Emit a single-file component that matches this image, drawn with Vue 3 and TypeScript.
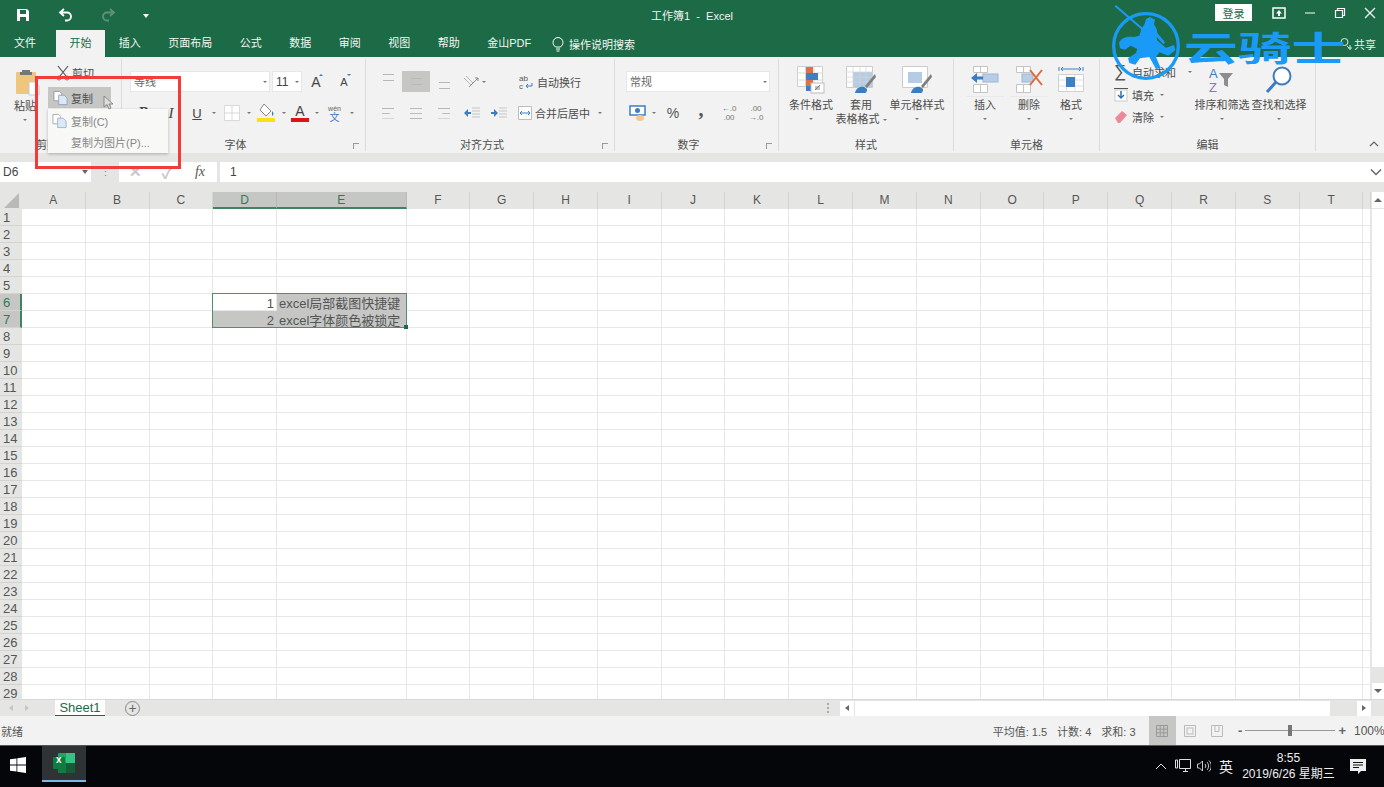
<script setup lang="ts">
const tabs = ['插入', '页面布局', '公式', '数据', '审阅', '视图', '帮助', '金山PDF']
const columns = ['A', 'B', 'C', 'D', 'E', 'F', 'G', 'H', 'I', 'J', 'K', 'L', 'M', 'N', 'O', 'P', 'Q', 'R', 'S', 'T', '']
const rows = Array.from({ length: 29 }, (_, i) => i + 1)

// 表格里有内容的单元格
const values: Record<string, string> = {
  D6: '1',
  D7: '2',
  E6: 'excel局部截图快捷键',
  E7: 'excel字体颜色被锁定',
}

const isHeadSelected = (c: string) => c === 'D' || c === 'E'
const isRowSelected = (r: number) => r === 6 || r === 7
const isCellSelected = (c: string, r: number) => isHeadSelected(c) && isRowSelected(r) && !(c === 'D' && r === 6)
</script>

<template>
  <div class="app">
    <header class="titlebar">
      <div class="quick">
        <svg class="q-save" width="16" height="16" viewBox="0 0 16 16"><path d="M2 2h10l2 2v10H2z" fill="#fff" /><rect x="5" y="3" width="6" height="4" fill="#1d6b46" /><rect x="5" y="10" width="6" height="4" fill="#1d6b46" /></svg>
        <svg class="q-undo" width="16" height="16" viewBox="0 0 16 16"><path d="M6 2L2 5.5 6 9M3 5.5h6a4 4 0 0 1 0 8H7" fill="none" stroke="#fff" stroke-width="1.8" /></svg>
        <svg class="q-redo" width="16" height="16" viewBox="0 0 16 16"><path d="M10 2l4 3.5L10 9M13 5.5H7a4 4 0 0 0 0 8h2" fill="none" stroke="#5d9279" stroke-width="1.8" /></svg>
        <svg class="q-more" width="8" height="8" viewBox="0 0 8 8"><path d="M1 3h6L4 7z" fill="#fff" /></svg>
      </div>
      <div class="doc-title">工作簿1&nbsp; - &nbsp;Excel</div>
      <button class="login">登录</button>
      <div class="win-btns">
        <svg width="14" height="12" viewBox="0 0 14 12"><rect x="1" y="1" width="12" height="10" fill="none" stroke="#fff" stroke-width="1.5" /><path d="M7 3L4 6.5h2V9h2V6.5h2z" fill="#fff" /></svg>
        <svg width="12" height="12" viewBox="0 0 12 12"><path d="M1 6h10" stroke="#fff" /></svg>
        <svg width="12" height="12" viewBox="0 0 12 12"><path d="M1.5 3.5h7v7h-7zM3.5 3.5v-2h7v7h-2" fill="none" stroke="#fff" stroke-width="1.2" /></svg>
        <svg width="12" height="12" viewBox="0 0 12 12"><path d="M1 1l10 10M11 1L1 11" stroke="#fff" stroke-width="1.1" /></svg>
      </div>
    </header>

    <nav class="tabs">
      <span class="tab tab-file">文件</span>
      <span class="tab active">开始</span>
      <span v-for="t in tabs" :key="t" class="tab">{{ t }}</span>
      <svg class="bulb" width="12" height="16" viewBox="0 0 12 16"><path d="M3.500 11C2 9.500 1 8.500 1 6.500a5 5 0 0 1 10 0c0 2-1 3-2.500 4.500zM4 13h4M4.500 15h3" fill="none" stroke="#fff" /></svg>
      <span class="search">操作说明搜索</span>
      <span class="share">
        <svg width="14" height="14" viewBox="0 0 14 14"><circle cx="5.500" cy="5" r="3.500" fill="none" stroke="#dfe9e4" /><path d="M8 9l2 2M11 8v5M9 11h4" stroke="#dfe9e4" fill="none" /></svg>
        共享
      </span>
    </nav>

    <section class="ribbon">
      <!-- 剪贴板 -->
      <div class="group" style="width: 122px">
        <div class="body flexrow">
          <div class="big paste">
            <svg class="big-icon" width="26" height="28" viewBox="0 0 26 28">
              <rect x="1" y="4" width="20" height="22" rx="1" fill="#f0c67c" />
              <path d="M7 4V2h8v2h2v3H5V4z" fill="#777" />
              <path d="M14 14h6l4 4v9H14z" fill="#fff" stroke="#c9c9c9" />
            </svg>
            <span class="big-text">粘贴</span>
            <i class="caret" />
          </div>
          <div class="clip-col">
            <div class="clip-row cut">
              <svg width="14" height="16" viewBox="0 0 14 16"><path d="M2 1l8 10M12 1L4 11" stroke="#555" stroke-width="1.2" /><circle cx="3" cy="13" r="2" fill="none" stroke="#3e7cc0" /><circle cx="11" cy="13" r="2" fill="none" stroke="#3e7cc0" /></svg>
              <span>剪切</span>
            </div>
            <div class="clip-row copy">
              <svg width="15" height="16" viewBox="0 0 16 16"><path d="M1 1h6l2 2v8H1z" fill="#fff" stroke="#999" /><path d="M6 5h6l3 3v7H6z" fill="#dce8f5" stroke="#8fa8c4" /></svg>
              <span>复制</span>
            </div>
          </div>
        </div>
        <div class="label off">剪贴板</div>
      </div>

      <!-- 字体 -->
      <div class="group" style="width: 244px">
        <div class="body pad8">
          <div class="row1 flexrow">
            <div class="box" style="width: 140px">等线<i class="caret end" /></div>
            <div class="box size" style="width: 30px">11<i class="caret end" /></div>
            <span class="ic" style="width: 28px"><b class="grow">A</b><i class="up" /></span>
            <span class="ic" style="width: 28px"><b class="shrink">A</b><i class="up dn" /></span>
          </div>
          <div class="row2 flexrow">
            <span class="ic letter" style="width: 28px"><b>B</b></span>
            <span class="ic letter" style="width: 26px"><i class="ital">I</i></span>
            <span class="ic letter" style="width: 26px"><u>U</u></span>
            <i class="caret c8" />
            <span class="ic" style="width: 27px">
              <svg width="16" height="16" viewBox="0 0 16 16"><path d="M.5.500h15v15H.5zM8 .5v15M.5 8h15" fill="#fff" stroke="#d9d9d9" /></svg>
            </span>
            <i class="caret c8 c7" />
            <span class="ic" style="width: 28px">
              <svg width="18" height="20" viewBox="0 0 18 20"><path d="M7 1l7 7-5 5-6-6z" fill="#fff" stroke="#888" /><path d="M15 8c2 2 2 4 0 5z" fill="#3e7cc0" /><rect y="15" width="18" height="4" fill="#fbe016" /></svg>
            </span>
            <i class="caret c8 c7" />
            <span class="ic" style="width: 26px">
              <svg width="18" height="20" viewBox="0 0 18 20"><text x="9" y="13" class="svg-a" text-anchor="middle">A</text><rect y="15" width="18" height="4" fill="#dc1414" /></svg>
            </span>
            <i class="caret c8" />
            <span class="ic wen" style="width: 27px"><small>wén</small><em>文</em></span>
            <i class="caret c8" />
          </div>
        </div>
        <div class="label off">字体<i class="launcher" /></div>
      </div>

      <!-- 对齐方式 -->
      <div class="group" style="width: 249px">
        <div class="body pad8">
          <div class="row1 flexrow">
            <span class="ic al" style="width: 28px"><i class="lines top" /></span>
            <span class="ic al on" style="width: 28px"><i class="lines" /></span>
            <span class="ic al" style="width: 28px"><i class="lines bot" /></span>
            <span class="ic" style="width: 26px">
              <svg width="16" height="14" viewBox="0 0 16 14"><path d="M1 3l7 7M3 1l7 7" stroke="#b5b5b5" /><path d="M6 12L15 3M12 3h3v3" stroke="#888" fill="none" /></svg>
            </span>
            <i class="caret c8 orient" />
            <span class="wrap-btn">
              <svg width="14" height="16" viewBox="0 0 14 16"><text x="0" y="7" class="svg-ab">ab</text><text x="0" y="15" class="svg-ab">c</text><path d="M13 9v3H7M9 10l-2 2 2 2" stroke="#3e7cc0" fill="none" /></svg>
              自动换行
            </span>
          </div>
          <div class="row2 flexrow">
            <span class="ic al" style="width: 28px"><i class="lines wide left" /></span>
            <span class="ic al" style="width: 28px"><i class="lines wide" /></span>
            <span class="ic al" style="width: 28px"><i class="lines wide right" /></span>
            <span class="ic" style="width: 27px">
              <svg width="16" height="12" viewBox="0 0 16 12"><path d="M8 1h8M8 4h8M8 7h8M8 10h8" stroke="#c5c5c5" /><path d="M0 6l4-4v3h3v2H4v3z" fill="#3e7cc0" /></svg>
            </span>
            <span class="ic" style="width: 28px">
              <svg width="16" height="12" viewBox="0 0 16 12"><path d="M8 1h8M8 4h8M8 7h8M8 10h8" stroke="#c5c5c5" /><path d="M7 6L3 2v3H0v2h3v3z" fill="#3e7cc0" /></svg>
            </span>
            <span class="wrap-btn merge">
              <svg width="14" height="14" viewBox="0 0 14 14"><path d="M.5.500h13v13H.5z" fill="#fff" stroke="#bdbdbd" /><path d="M2 7h10M4 5L2 7l2 2M10 5l2 2-2 2" fill="none" stroke="#3e7cc0" /></svg>
              合并后居中
            </span>
            <i class="caret c8 merge-c" />
          </div>
        </div>
        <div class="label off">对齐方式<i class="launcher" /></div>
      </div>

      <!-- 数字 -->
      <div class="group" style="width: 164px">
        <div class="body pad11">
          <div class="row1 flexrow">
            <div class="box" style="width: 144px">常规<i class="caret end" /></div>
          </div>
          <div class="row2 flexrow">
            <span class="ic" style="width: 24px">
              <svg width="18" height="17" viewBox="0 0 18 17"><rect x="1" y="1" width="15" height="9" fill="#fff" stroke="#3e7cc0" stroke-width="1.500" /><circle cx="8.500" cy="5.500" r="2.500" fill="#3e7cc0" /><ellipse cx="11" cy="13" rx="4" ry="3" fill="#f2c98f" /></svg>
            </span>
            <i class="caret c8" />
            <span class="ic pct" style="width: 30px">%</span>
            <span class="ic comma" style="width: 26px">,</span>
            <span class="ic dec" style="width: 30px"><small><em>←</em>.0</small><small>.00</small></span>
            <span class="ic dec" style="width: 24px"><small>.00</small><small><em>→</em>.0</small></span>
          </div>
        </div>
        <div class="label off">数字<i class="launcher" /></div>
      </div>

      <!-- 样式 -->
      <div class="group" style="width: 175px">
        <div class="body flexrow pad7">
          <div class="big" style="width: 50px">
            <svg class="big-icon" width="28" height="28" viewBox="0 0 28 28">
              <path d="M.5.500h25v20H.5z" fill="#fff" stroke="#d0d0d0" />
              <path d="M8.500.5v20M17 .5v20M.5 7h25M.5 14h25" stroke="#d8d8d8" />
              <rect x="9" y="1" width="7" height="6" fill="#e07140" />
              <rect x="9" y="7" width="12" height="7" fill="#3f7fc4" />
              <rect x="9" y="14" width="7" height="6" fill="#e07140" />
              <rect x="9" y="20" width="7" height="5" fill="#3f7fc4" />
              <rect x="14" y="17" width="13" height="10" fill="#fff" stroke="#bbb" />
              <path d="M18 24l5-5M18 21h5M18 23h5" stroke="#666" stroke-width=".8" />
            </svg>
            <span class="big-text">条件格式</span>
            <i class="caret" />
          </div>
          <div class="big" style="width: 50px">
            <svg class="big-icon" width="30" height="28" viewBox="0 0 30 28">
              <path d="M.5.500h26v21H.5z" fill="#fff" stroke="#ccc" />
              <path d="M7 6h19v15H7z" fill="#b6cbe4" />
              <path d="M.5 6h26M.5 11h26M.5 16h26M7 .5v21M14 .5v21M20 .5v21" stroke="#d5d5d5" stroke-width=".7" />
              <path d="M29 8L19 20l2 2L30 11z" fill="#7f7f7f" />
              <path d="M9 27c1-5 5-7 9-6l3 2c0 3-1 4-2 4z" fill="#3e7cc0" />
            </svg>
            <span class="big-text">套用</span>
            <span class="big-text">表格格式 <i class="caret inl" /></span>
          </div>
          <div class="big" style="width: 62px">
            <svg class="big-icon" width="30" height="28" viewBox="0 0 30 28">
              <path d="M.5.500h25v21H.5z" fill="#fff" stroke="#ccc" />
              <path d="M6 6h14v11H6z" fill="#b6cbe4" />
              <path d="M29 8L19 20l2 2L30 11z" fill="#7f7f7f" />
              <path d="M9 27c1-5 5-7 9-6l3 2c0 3-1 4-2 4z" fill="#3e7cc0" />
            </svg>
            <span class="big-text">单元格样式</span>
            <i class="caret" />
          </div>
        </div>
        <div class="label">样式</div>
      </div>

      <!-- 单元格 -->
      <div class="group" style="width: 146px">
        <div class="body flexrow pad9">
          <div class="big split" style="width: 44px">
            <svg class="big-icon" width="28" height="28" viewBox="0 0 28 28">
              <path d="M2.500.500h14v6h-14zM9.500.5v6M2.500 18.500h14v8h-14zM9.500 18.500v8" fill="#fff" stroke="#c4c4c4" />
              <rect x="12" y="8" width="15" height="8" fill="#b8cde5" stroke="#9db6d3" />
              <path d="M0 12l6-5v3.500h6v3H6V17z" fill="#3e7cc0" />
            </svg>
            <span class="big-text">插入</span>
            <i class="caret" />
          </div>
          <div class="big split" style="width: 44px">
            <svg class="big-icon" width="28" height="28" viewBox="0 0 28 28">
              <path d="M1.500.500h14v6h-14zM8.500.5v6M1.500 18.500h14v8h-14zM8.500 18.500v8" fill="#fff" stroke="#c4c4c4" />
              <rect x="7" y="8" width="11" height="8" fill="#b8cde5" stroke="#9db6d3" />
              <path d="M15 4l12 15M27 4L15 19" stroke="#df6b38" stroke-width="2" />
            </svg>
            <span class="big-text">删除</span>
            <i class="caret" />
          </div>
          <div class="big" style="width: 40px">
            <svg class="big-icon" width="26" height="28" viewBox="0 0 26 28">
              <path d="M1 1l0 4M25 1v4M3 3h20M3 3l2-2M3 3l2 2M23 3l-2-2M23 3l-2 2" stroke="#3e7cc0" fill="none" />
              <path d="M.5 8.500h25v17H.5z" fill="#fff" stroke="#cfcfcf" />
              <path d="M8.500 8.500v17M17 8.500v17M.5 14h25M.5 20h25" stroke="#dedede" />
              <rect x="8" y="11" width="9" height="10" fill="#3f7fc4" />
            </svg>
            <span class="big-text">格式</span>
            <i class="caret" />
          </div>
        </div>
        <div class="label">单元格</div>
      </div>

      <!-- 编辑 -->
      <div class="group" style="width: 216px">
        <div class="body flexrow pad14">
          <div class="edit-col">
            <div class="edit-row">
              <span class="sigma">∑</span>
              <span>自动求和</span><i class="caret c8 sum-c" />
            </div>
            <div class="edit-row">
              <svg width="14" height="14" viewBox="0 0 14 14"><path d="M0 .5h14" stroke="#555" /><rect x="1" y="2" width="12" height="11" fill="#fff" stroke="#ccc" /><path d="M7 3v7M4 7l3 3 3-3" fill="none" stroke="#2b70b8" stroke-width="1.500" /></svg>
              <span>填充</span><i class="caret c8" />
            </div>
            <div class="edit-row">
              <svg width="14" height="14" viewBox="0 0 14 14"><path d="M1 8l7-7 5 4-7 8H4z" fill="#ec8a97" /></svg>
              <span>清除</span><i class="caret c8" />
            </div>
          </div>
          <div class="big" style="width: 56px">
            <svg class="big-icon" width="28" height="28" viewBox="0 0 28 28">
              <text x="1" y="12" class="svg-az blue">A</text>
              <text x="1" y="26" class="svg-az purple">Z</text>
              <path d="M11 7h14l-5 6v8l-4-2v-6z" fill="#8d8d8d" />
            </svg>
            <span class="big-text">排序和筛选</span>
            <i class="caret" />
          </div>
          <div class="big" style="width: 58px">
            <svg class="big-icon" width="28" height="28" viewBox="0 0 28 28">
              <circle cx="17" cy="10" r="8.500" fill="#fff" stroke="#3e7cc0" stroke-width="2" />
              <path d="M11 16L2 26" stroke="#3e7cc0" stroke-width="3" />
            </svg>
            <span class="big-text">查找和选择</span>
            <i class="caret" />
          </div>
        </div>
        <div class="label">编辑</div>
      </div>

      <div class="collapse-wrap">
        <svg width="10" height="8" viewBox="0 0 10 8"><path d="M1 6l4-4 4 4" fill="none" stroke="#666" stroke-width="1.200" /></svg>
      </div>
    </section>

    <div class="band" />

    <div class="fxbar">
      <div class="namebox">D6<i class="caret-dark" /></div>
      <div class="fx-dots">⋮</div>
      <div class="fx-btns">
        <span class="fx-x">✕</span>
        <span class="fx-ok">✓</span>
        <span class="fx-f">fx</span>
      </div>
      <div class="fx-input">
        <span>1</span>
        <svg width="12" height="8" viewBox="0 0 12 8"><path d="M1 1.500l5 5 5-5" fill="none" stroke="#666" stroke-width="1.500" /></svg>
      </div>
    </div>

    <main class="sheet-wrap">
      <div class="sheet">
        <div class="corner">
          <svg width="16" height="15" viewBox="0 0 16 15"><path d="M15 0v15H0z" fill="#b9bab8" /></svg>
        </div>
        <div v-for="c in columns" :key="c" class="col-head" :class="{ 'head-on': isHeadSelected(c) }">{{ c }}</div>
        <template v-for="r in rows" :key="r">
          <div class="row-head" :class="{ 'row-on': isRowSelected(r) }">{{ r }}</div>
          <div
            v-for="c in columns"
            :key="c"
            class="cell"
            :class="{ sel: isCellSelected(c, r), num: c === 'D' }"
          >{{ values[c + r] }}</div>
        </template>
        <div class="selection"><i class="handle" /></div>
      </div>
      <div class="vscroll">
        <div class="v-btn"><i class="tri-up" /></div>
        <div class="v-thumb" />
        <div class="v-track" />
        <div class="v-btn"><i class="tri-down" /></div>
      </div>
    </main>

    <div class="sheetbar">
      <div class="sheet-nav"><i class="nav-l" /><i class="nav-r" /></div>
      <div class="sheet-tab">Sheet1</div>
      <div class="add-sheet">+</div>
      <div class="spacer" />
      <div class="split-dots"><i /><i /><i /></div>
      <div class="hscroll">
        <div class="h-btn"><i class="h-l" /></div>
        <div class="h-thumb" />
        <div class="h-track" />
        <div class="h-btn"><i class="h-r" /></div>
      </div>
    </div>

    <footer class="status">
      <span class="ready">就绪</span>
      <div class="spacer" />
      <span class="stat">平均值: 1.5</span>
      <span class="stat">计数: 4</span>
      <span class="stat last">求和: 3</span>
      <div class="view on">
        <svg width="12" height="12" viewBox="0 0 12 12"><path d="M.5.500h11v11H.5zM4.200.5v11M7.800.5v11M.5 4.200h11M.5 7.800h11" fill="none" stroke="#999" /></svg>
      </div>
      <div class="view">
        <svg width="12" height="12" viewBox="0 0 12 12"><path d="M.5.500h11v11H.5z" fill="none" stroke="#bbb" /><rect x="3" y="3" width="6" height="6" fill="none" stroke="#bbb" /></svg>
      </div>
      <div class="view">
        <svg width="12" height="12" viewBox="0 0 12 12"><path d="M.5.500h11v11H.5zM4 .5v6h4v-6" fill="none" stroke="#bbb" /></svg>
      </div>
      <div class="zoom">
        <span class="z-sign">-</span>
        <div class="z-track"><i class="z-thumb" /></div>
        <span class="z-sign">+</span>
      </div>
      <span class="pct-text">100%</span>
    </footer>

    <div class="taskbar">
      <div class="start">
        <svg width="16" height="16" viewBox="0 0 16 16"><path d="M0 2.300l6.500-.9v6.200H0zM7.300 1.300L16 0v7.600H7.300zM0 8.400h6.500v6.200L0 13.700zM7.300 8.400H16V16l-8.700-1.300z" fill="#fff" /></svg>
      </div>
      <div class="task-item">
        <svg width="22" height="20" viewBox="0 0 22 20">
          <rect x="5" y="0" width="17" height="20" rx="1" fill="#21a366" />
          <rect x="13" y="0" width="9" height="10" fill="#33c481" />
          <rect x="5" y="10" width="9" height="10" fill="#107c41" />
          <rect x="13" y="10" width="9" height="10" fill="#185c37" />
          <rect x="0" y="4" width="12" height="12" rx="1" fill="#107c41" />
        </svg>
        <span class="task-x">x</span>
      </div>
      <div class="spacer" />
      <div class="tray">
        <svg width="12" height="8" viewBox="0 0 12 8"><path d="M1 7l5-5 5 5" fill="none" stroke="#ddd" /></svg>
        <svg class="tray-net" width="16" height="14" viewBox="0 0 16 14"><path d="M4.500.5h11v9h-11zM8 12.500h5M10.500 10v2M.5 1h2v8h-2z" fill="none" stroke="#ddd" /></svg>
        <svg class="tray-vol" width="14" height="12" viewBox="0 0 14 12"><path d="M.5 4h2l3-3v10l-3-3h-2zM8 4c1 1 1 3 0 4M10 2c2 2 2 6 0 8M12 .5c3 3 3 8 0 11" fill="none" stroke="#ddd" stroke-width=".9" /></svg>
        <span class="ime">英</span>
        <div class="clock">
          <span>8:55</span>
          <span>2019/6/26 星期三</span>
        </div>
        <svg class="notify" width="16" height="15" viewBox="0 0 16 15"><path d="M0 0h16v12h-5l-3 3v-3H0z" fill="#eee" /><path d="M3 3.500h10M3 6h10M3 8.500h6" stroke="#111" /></svg>
      </div>
    </div>

    <!-- 盖在上层：复制菜单、红框、光标、水印 -->
    <div class="popup">
      <div class="pop-item">
        <svg width="15" height="16" viewBox="0 0 16 16"><path d="M1 1h6l2 2v8H1z" fill="#fff" stroke="#aaa" /><path d="M6 5h6l3 3v7H6z" fill="#dce8f5" stroke="#9fb6d0" /></svg>
        <span>复制(C)</span>
      </div>
      <div class="pop-item"><span class="no-icon">复制为图片(P)...</span></div>
    </div>
    <div class="redbox" />
    <svg class="cursor" width="11" height="15" viewBox="0 0 11 15"><path d="M1 1v11l3-2.500 2 4.500 2-1-2-4h4z" fill="#ddd" stroke="#777" stroke-width=".8" /></svg>

    <div class="watermark">
      <svg class="wm-logo" width="74" height="80" viewBox="30 10 222 240">
        <circle cx="138" cy="139" r="97" fill="none" stroke="#1a9af7" stroke-width="10" />
        <path d="M46 18L200 150" stroke="#1a9af7" stroke-width="6" />
        <path d="M57 130C62 115 80 108 100 112L118 108 124 88 134 72 138 58 150 52 165 60 162 74 170 88 172 100 195 128 190 134 170 112 172 130 195 146 222 136 226 152 205 168 178 158 168 172 182 205 168 208 148 172 120 176 106 195 88 190 84 176 108 160 112 148 92 138 75 150 60 146Z" fill="#1a9af7" />
      </svg>
      <span class="wm-text">云骑士</span>
    </div>
  </div>
</template>

<style scoped>
.app {
  position: relative;
  width: 1384px;
  height: 787px;
  overflow: hidden;
  display: flex;
  flex-direction: column;
  background: #f1f2f1;
  color: #4d4d4d;
  font-family: "Liberation Sans", "Noto Sans CJK SC", sans-serif;
  font-size: 11px;
}

.spacer {
  flex: 1;
}

.flexrow {
  display: flex;
  align-items: center;
}

/* 标题栏 */
.titlebar {
  height: 30px;
  flex: none;
  display: flex;
  align-items: center;
  background: #1d6b46;
  color: #fff;
}

.quick {
  display: flex;
  align-items: center;
  width: 560px;
  padding-left: 15px;
  box-sizing: border-box;
}

.q-undo {
  margin-left: 27px;
}

.q-redo {
  margin-left: 26px;
}

.q-more {
  margin-left: 26px;
}

.doc-title {
  width: 264px;
  text-align: center;
  font-size: 11px;
  color: #eef5f1;
}

.login {
  margin-left: 391px;
  width: 37px;
  height: 17px;
  margin-top: -5px;
  border: none;
  background: #fff;
  color: #1d6b46;
  font: inherit;
  padding: 0;
}

.win-btns {
  display: flex;
  align-items: center;
  margin-left: 20px;
  gap: 18px;
  margin-top: -5px;
}

/* 选项卡 */
.tabs {
  height: 27px;
  flex: none;
  display: flex;
  align-items: center;
  background: #1d6b46;
  color: #f2f7f4;
}

.tab {
  height: 27px;
  line-height: 26px;
  padding: 0 13.75px;
  font-size: 11px;
}

.tab-file {
  width: 56px;
  padding: 0;
  text-align: center;
  box-sizing: border-box;
  text-indent: -6px;
}

.tab.active {
  width: 49px;
  padding: 0;
  text-align: center;
  background: #f1f2f1;
  color: #1d6b46;
}

.bulb {
  margin-left: 7px;
}

.search {
  margin-left: 5px;
  font-size: 11px;
}

.share {
  margin-left: auto;
  margin-right: 8px;
  display: flex;
  align-items: center;
  gap: 1px;
  color: #e6eee9;
}

/* 功能区 */
.ribbon {
  height: 96px;
  flex: none;
  display: flex;
  padding-top: 2px;
  box-sizing: border-box;
  background: #f1f2f1;
}

.group {
  height: 92px;
  box-sizing: border-box;
  border-right: 1px solid #dcdddb;
  display: flex;
  flex-direction: column;
}

.body {
  height: 78px;
  flex: none;
}

.pad7 {
  padding-left: 7px;
}

.pad8 {
  padding-left: 8px;
}

.pad9 {
  padding-left: 9px;
}

.pad11 {
  padding-left: 11px;
}

.pad14 {
  padding-left: 14px;
}

.body.flexrow {
  align-items: flex-start;
}

.label {
  position: relative;
  height: 16px;
  line-height: 16px;
  text-align: center;
  color: #505050;
}

/* 带右下角小按钮的分组，标题偏左 */
.label.off {
  padding-right: 16px;
}

.launcher {
  position: absolute;
  right: 6px;
  top: 6px;
  width: 5px;
  height: 5px;
  border-left: 1px solid #999;
  border-top: 1px solid #999;
}

.row1 {
  height: 21px;
  margin-top: 12px;
}

.row2 {
  height: 22px;
  margin-top: 10px;
}

.box {
  position: relative;
  height: 21px;
  line-height: 21px;
  box-sizing: border-box;
  padding-left: 3px;
  margin-right: 2px;
  background: #fff;
  color: #666;
  border: 1px solid #e6e7e6;
}

.box.size {
  margin-right: 0;
  font-size: 12px;
  color: #444;
}

.ic {
  position: relative;
  flex: none;
  height: 22px;
  display: flex;
  align-items: center;
  justify-content: center;
}

.caret {
  display: block;
  width: 0;
  height: 0;
  flex: none;
  border-left: 2px solid transparent;
  border-right: 2px solid transparent;
  border-top: 2px solid #777;
}

.caret.end {
  position: absolute;
  right: 2px;
  top: 9px;
}

.caret.c8 {
  margin: 0 2px;
}

.caret.c7 {
  margin: 0 1.500px;
}

.caret.inl {
  display: inline-block;
  vertical-align: middle;
}

.caret.orient {
  margin-left: -2px;
}

.caret.merge-c {
  margin-left: 8px;
}

.caret.sum-c {
  margin-left: 8px;
}

.grow {
  font-size: 14px;
  font-weight: 400;
  color: #444;
}

.shrink {
  font-size: 11px;
  font-weight: 400;
  color: #444;
}

.up {
  position: absolute;
  top: 3px;
  left: 17px;
  width: 0;
  height: 0;
  border-left: 2px solid transparent;
  border-right: 2px solid transparent;
  border-bottom: 2px solid #3e7cc0;
}

.up.dn {
  border-bottom: none;
  border-top: 2px solid #3e7cc0;
}

.letter {
  font-size: 14px;
  color: #444;
  font-family: "Liberation Serif", serif;
}

.letter u {
  font-family: "Liberation Sans", sans-serif;
  font-size: 13px;
}

.ital {
  font-style: italic;
  font-size: 15px;
}

.wen {
  flex-direction: column;
  line-height: 9px;
}

.wen small {
  font-size: 7px;
  color: #666;
}

.wen em {
  font-style: normal;
  font-size: 10px;
  color: #3e7cc0;
}

.svg-a {
  font-size: 14px;
  fill: #444;
}

.svg-ab {
  font-size: 8px;
  fill: #555;
}

.svg-az {
  font-size: 13px;
}

.svg-az.blue {
  fill: #3e7cc0;
}

.svg-az.purple {
  fill: #a868c0;
}

.al.on {
  height: 21px;
  background: #c6c7c5;
}

.lines {
  display: block;
  width: 11px;
  height: 5px;
  border-top: 1px solid #b8b8b8;
  border-bottom: 1px solid #b8b8b8;
}

.lines.top {
  margin-top: -8px;
}

.lines.bot {
  margin-top: 8px;
}

.lines.wide {
  width: 12px;
  height: 9px;
  background: linear-gradient(#bdbdbd, #bdbdbd) center / 100% 1px no-repeat;
}

.lines.left {
  clip-path: polygon(0 0, 100% 0, 100% 30%, 65% 30%, 65% 70%, 100% 70%, 100% 100%, 0 100%);
}

.lines.right {
  clip-path: polygon(0 0, 100% 0, 100% 100%, 0 100%, 0 70%, 35% 70%, 35% 30%, 0 30%);
}

.wrap-btn {
  display: flex;
  align-items: center;
  gap: 4px;
  margin-left: 31px;
  white-space: nowrap;
  color: #4d4d4d;
}

.wrap-btn.merge {
  margin-left: 5px;
  gap: 3px;
}

.pct {
  font-size: 14px;
  color: #555;
}

.comma {
  font-size: 20px;
  font-weight: 700;
  color: #555;
  font-family: "Liberation Serif", serif;
  padding-bottom: 8px;
  box-sizing: border-box;
}

.dec {
  flex-direction: column;
  line-height: 9px;
}

.dec small {
  font-size: 8px;
  color: #777;
}

.dec em {
  font-style: normal;
  color: #2f73ba;
  font-weight: 700;
}

.big {
  flex: none;
  display: flex;
  flex-direction: column;
  align-items: center;
}

.big-icon {
  margin-top: 7px;
  height: 28px;
}

.big-text {
  line-height: 14px;
  white-space: nowrap;
  color: #4d4d4d;
}

.big-text:first-of-type {
  margin-top: 4px;
}

.big > .caret {
  margin-top: 6px;
}

.split .big-text:first-of-type {
  margin-top: 2px;
  padding-top: 1px;
  width: 38px;
  text-align: center;
  border-top: 1px solid #e9eae8;
}

.paste {
  width: 50px;
}

.paste .big-icon {
  margin: 9px 0 0 5px;
}

.paste .big-text:first-of-type {
  margin-top: 3px;
}

.clip-col {
  margin-left: -2px;
}

.clip-row {
  display: flex;
  align-items: center;
  gap: 3px;
  width: 63px;
  height: 21px;
  box-sizing: border-box;
}

.cut {
  margin-top: 3px;
  padding-left: 8px;
  gap: 2px;
}

.copy {
  margin-top: 4px;
  padding-left: 5px;
}

.copy {
  background: #c6c7c5;
}

.edit-col {
  width: 80px;
  padding-top: 2px;
}

.edit-row {
  display: flex;
  align-items: center;
  height: 22.500px;
  gap: 4px;
}

.sigma {
  width: 14px;
  font-size: 17px;
  line-height: 14px;
  color: #555;
}

.collapse-wrap {
  flex: 1;
  display: flex;
  justify-content: flex-end;
  align-items: flex-end;
  padding: 0 5px 5px 0;
}

.band {
  height: 9px;
  flex: none;
  background: #e5e6e4;
}

/* 编辑栏 */
.fxbar {
  height: 20px;
  flex: none;
  display: flex;
  background: #e5e6e4;
}

.namebox {
  position: relative;
  width: 91px;
  line-height: 20px;
  padding-left: 3px;
  box-sizing: border-box;
  background: #fff;
  font-size: 12px;
  color: #444;
}

.caret-dark {
  position: absolute;
  right: 3px;
  top: 8px;
  width: 0;
  height: 0;
  border-left: 3.500px solid transparent;
  border-right: 3.500px solid transparent;
  border-top: 4px solid #666;
}

.fx-dots {
  width: 28px;
  text-align: center;
  line-height: 20px;
  color: #888;
}

.fx-btns {
  width: 98px;
  display: flex;
  align-items: center;
  background: #fff;
}

.fx-x,
.fx-ok {
  width: 32px;
  color: #c8c8c8;
  font-size: 15px;
  font-weight: 700;
  text-align: center;
}

.fx-f {
  width: 34px;
  text-align: center;
  font-family: "Liberation Serif", serif;
  font-style: italic;
  font-size: 14px;
  color: #555;
}

.fx-input {
  flex: 1;
  margin-left: 3px;
  display: flex;
  align-items: center;
  justify-content: space-between;
  padding: 0 2px 0 10px;
  background: #fff;
  font-size: 12px;
  color: #444;
}

/* 表格 */
.sheet-wrap {
  flex: 1;
  min-height: 0;
  display: flex;
  padding-top: 10px;
  box-sizing: border-box;
  background: #e5e6e4;
}

.sheet {
  position: relative;
  width: 1371px;
  display: grid;
  grid-template-columns: 22px repeat(4, 63.75px) 129.5px repeat(15, 63.8px) 7.5px;
  grid-template-rows: 16.5px repeat(29, 17.02px);
  overflow: hidden;
  background: #fff;
  font-size: 13px;
}

.corner {
  display: flex;
  align-items: flex-end;
  justify-content: flex-end;
  padding: 0 2px 1px 0;
  background: #e5e6e4;
  overflow: hidden;
}

.col-head {
  background: #e5e6e4;
  border-right: 1px solid #d3d4d2;
  box-sizing: border-box;
  text-align: center;
  line-height: 16px;
  font-size: 12px;
  color: #555;
}

.col-head.head-on {
  background: #c6c7c5;
  border-bottom: 2px solid #3c8561;
  color: #2f7a55;
  border-right-color: #b9bab8;
}

.row-head {
  background: #e5e6e4;
  border-bottom: 1px solid #d3d4d2;
  box-sizing: border-box;
  line-height: 17px;
  padding-left: 3px;
  color: #555;
}

.row-head.row-on {
  background: #c6c7c5;
  border-right: 2px solid #3c8561;
  color: #2f7a55;
}

.cell {
  min-width: 0;
  box-sizing: border-box;
  border-right: 1px solid #e6e7e6;
  border-bottom: 1px solid #e6e7e6;
  line-height: 19px;
  padding: 0 4px 0 2px;
  white-space: nowrap;
  overflow: hidden;
  color: #555;
}

.cell.num {
  text-align: right;
  padding-right: 2px;
}

.cell.sel {
  background: #c6c7c5;
  border-color: #c6c7c5;
}

.selection {
  position: absolute;
  grid-column: 5 / 7;
  grid-row: 7 / 9;
  inset: -1px 0 0 -1px;
  border: 1px solid #4f8f6f;
  pointer-events: none;
}

.handle {
  position: absolute;
  right: -2px;
  bottom: -2px;
  width: 4px;
  height: 4px;
  background: #1d6b46;
}

.vscroll {
  flex: 1;
  padding-left: 1px;
  display: flex;
  flex-direction: column;
}

.v-btn {
  height: 16px;
  flex: none;
  display: flex;
  align-items: center;
  justify-content: center;
  background: #fff;
}

.v-thumb {
  height: 459px;
  background: #fff;
  border-top: 1px solid #e5e6e4;
  box-sizing: border-box;
}

.v-track {
  flex: 1;
  background: #e5e6e4;
}

.tri-up,
.tri-down {
  width: 0;
  height: 0;
  border-left: 4px solid transparent;
  border-right: 4px solid transparent;
}

.tri-up {
  border-bottom: 4px solid #666;
}

.tri-down {
  border-top: 4px solid #666;
}

/* 工作表标签 */
.sheetbar {
  height: 17px;
  flex: none;
  display: flex;
  align-items: center;
  background: #e5e6e4;
  border-top: 1px solid #d8d9d7;
  box-sizing: border-box;
}

.sheet-nav {
  width: 55px;
  display: flex;
  gap: 12px;
  padding-left: 9px;
  box-sizing: border-box;
}

.nav-l,
.nav-r,
.h-l,
.h-r {
  width: 0;
  height: 0;
  border-top: 3.500px solid transparent;
  border-bottom: 3.500px solid transparent;
}

.nav-l {
  border-right: 4px solid #c4c5c3;
}

.nav-r {
  border-left: 4px solid #c4c5c3;
}

.sheet-tab {
  width: 50px;
  height: 16px;
  line-height: 15px;
  text-align: center;
  background: #fff;
  color: #1d6b46;
  font-size: 13px;
  border-bottom: 1px solid #1d6b46;
  box-sizing: border-box;
}

.add-sheet {
  width: 13px;
  height: 13px;
  margin-left: 20px;
  border: 1px solid #888;
  border-radius: 50%;
  line-height: 12px;
  text-align: center;
  font-size: 14px;
  color: #666;
}

.split-dots {
  width: 4px;
  margin-right: 9px;
  display: flex;
  flex-direction: column;
  gap: 2px;
}

.split-dots i {
  width: 2px;
  height: 2px;
  background: #aaa;
}

.hscroll {
  width: 531px;
  height: 15px;
  margin-right: 13px;
  display: flex;
}

.h-btn {
  width: 14px;
  display: flex;
  align-items: center;
  justify-content: center;
  background: #fff;
}

.h-l {
  border-right: 4px solid #666;
}

.h-r {
  border-left: 4px solid #666;
}

.h-thumb {
  width: 476px;
  background: #fff;
  border-left: 1px solid #e5e6e4;
  box-sizing: border-box;
}

.h-track {
  flex: 1;
  background: #e5e6e4;
}

/* 状态栏 */
.status {
  height: 29px;
  flex: none;
  display: flex;
  align-items: center;
  background: #f1f2f1;
  color: #555;
  font-size: 11px;
}

.ready {
  padding-left: 1px;
}

.stat {
  margin-right: 10px;
}

.stat.last {
  margin-right: 13px;
}

.view {
  width: 27.500px;
  height: 29px;
  display: flex;
  align-items: center;
  justify-content: center;
}

.view.on {
  background: #c6c7c5;
}

.zoom {
  display: flex;
  align-items: center;
  margin-left: 7px;
  gap: 3px;
}

.z-sign {
  font-size: 13px;
  font-weight: 700;
  color: #666;
}

.z-track {
  position: relative;
  width: 90px;
  height: 1px;
  background: #999;
}

.z-thumb {
  position: absolute;
  left: 43px;
  top: -5px;
  width: 4px;
  height: 11px;
  background: #777;
}

.pct-text {
  width: 30px;
  margin-left: 8px;
  font-size: 12px;
  white-space: nowrap;
}

/* 任务栏 */
.taskbar {
  height: 42px;
  flex: none;
  display: flex;
  align-items: flex-start;
  background: #05060a;
  border-top: 1px solid #555;
  box-sizing: border-box;
  color: #eee;
}

.start {
  width: 42px;
  height: 37px;
  display: flex;
  align-items: center;
  padding-left: 10px;
  box-sizing: border-box;
}

.task-item {
  position: relative;
  width: 44px;
  height: 36px;
  display: flex;
  align-items: center;
  justify-content: center;
  background: #2f3335;
  border-bottom: 2px solid #76b9ed;
  box-sizing: border-box;
}

.task-x {
  position: absolute;
  left: 14px;
  top: 8px;
  color: #fff;
  font-size: 10px;
  font-weight: 700;
}

.tray {
  display: flex;
  align-items: center;
  height: 40px;
  padding-right: 18px;
}

.tray-net {
  margin-left: 8px;
}

.tray-vol {
  margin-left: 6px;
}

.ime {
  margin-left: 8px;
  font-size: 14px;
  font-family: "Noto Sans CJK SC", sans-serif;
}

.clock {
  margin-left: 10px;
  width: 91px;
  display: flex;
  flex-direction: column;
  align-items: center;
  line-height: 16px;
  font-size: 12px;
  white-space: nowrap;
}

.notify {
  margin-left: 16px;
}

/* 盖在上层的内容 */
.popup {
  position: absolute;
  left: 48px;
  top: 109px;
  width: 120px;
  height: 44px;
  padding-top: 1px;
  box-sizing: border-box;
  background: #f8f8f7;
  box-shadow: 0 1px 3px rgba(0, 0, 0, 0.25);
  color: #858585;
}

.pop-item {
  display: flex;
  align-items: center;
  gap: 4px;
  height: 21.500px;
  padding-left: 4px;
}

.no-icon {
  padding-left: 19px;
}

.redbox {
  position: absolute;
  left: 35px;
  top: 76px;
  width: 146px;
  height: 93px;
  box-sizing: border-box;
  border: 3px solid #f23b3b;
  pointer-events: none;
}

.cursor {
  position: absolute;
  left: 103px;
  top: 95px;
}

.watermark {
  position: absolute;
  left: 1110px;
  top: 3px;
  pointer-events: none;
}

.wm-logo {
  display: block;
}

.wm-text {
  position: absolute;
  left: 74px;
  top: 22px;
  font-family: "Noto Sans CJK SC", sans-serif;
  font-size: 34px;
  line-height: 44px;
  font-weight: 700;
  white-space: nowrap;
  color: #1a9af7;
  transform: scaleX(1.58);
  transform-origin: left center;
}
</style>

<style>
html,
body {
  margin: 0;
  overflow: hidden;
}
</style>
